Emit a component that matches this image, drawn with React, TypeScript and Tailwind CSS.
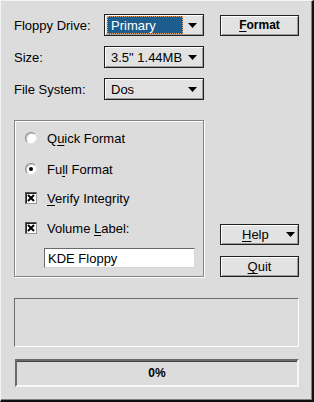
import React from "react";

const U = ({ children }: { children: React.ReactNode }) => (
  <span className="underline decoration-1 underline-offset-[2px]">{children}</span>
);

const Arrow = () => (
  <svg width="9" height="5" viewBox="0 0 9 5" className="shrink-0">
    <polygon points="0,0 9,0 4.5,5" fill="#000" />
  </svg>
);

const bevel =
  "border border-[#202020] bg-[#e2e2e2] shadow-[inset_1px_1px_0_#ffffff,inset_-1px_-1px_0_#9a9a9a]";

function Combo({ value, focused }: { value: string; focused?: boolean }) {
  return (
    <div className={`w-[100px] h-[22px] flex items-center pr-[6px] ${bevel}`}>
      {focused ? (
        <div className="ml-[2px] flex-1 h-[18px] bg-[#1d5d8d] text-white flex items-center pl-[4px] outline-1 outline-dotted outline-[#e8a060] -outline-offset-1">
          {value}
        </div>
      ) : (
        <div className="ml-[6px] flex-1">{value}</div>
      )}
      <div className="ml-[5px]">
        <Arrow />
      </div>
    </div>
  );
}

function Radio({ checked }: { checked?: boolean }) {
  return (
    <div className="w-[12px] h-[12px] rounded-full bg-white border border-t-[#8a8a8a] border-l-[#8a8a8a] border-r-[#e8e8e8] border-b-[#e8e8e8] flex items-center justify-center shadow-[inset_1px_1px_0_#c8c8c8]">
      {checked && <div className="w-[4px] h-[4px] rounded-full bg-black" />}
    </div>
  );
}

function Check() {
  return (
    <div className="w-[12px] h-[12px] bg-white border border-t-[#555] border-l-[#555] border-r-[#999] border-b-[#999] shadow-[inset_1px_1px_0_#222] flex items-center justify-center">
      <svg width="8" height="8" viewBox="0 0 8 8">
        <path d="M1 1 L7 7 M7 1 L1 7" stroke="#000" strokeWidth="2" />
      </svg>
    </div>
  );
}

export default function App() {
  return (
    <div className="w-[314px] h-[402px] bg-[#dcdcdc] text-black text-[13px] leading-none font-['Liberation_Sans',Arial,sans-serif] border-l border-t border-l-[#f4f4f4] border-t-[#f4f4f4] border-r-2 border-b-2 border-r-[#111] border-b-[#111] shadow-[inset_-1px_-1px_0_#808080]">
      <div className="pl-[13px] pt-[13px] flex flex-col">
        <div className="flex items-center h-[22px]">
          <div className="w-[90px]">Floppy Drive:</div>
          <Combo value="Primary" focused />
          <div className={`ml-[16px] w-[79px] h-[21px] flex items-center justify-center font-bold text-[12px] ${bevel}`}>
            <U>F</U>ormat
          </div>
        </div>
        <div className="flex items-center h-[22px] mt-[10px]">
          <div className="w-[90px]">Size:</div>
          <Combo value={'3.5" 1.44MB'} />
        </div>
        <div className="flex items-center h-[22px] mt-[10px]">
          <div className="w-[90px]">File System:</div>
          <Combo value="Dos" />
        </div>

        <div className="flex mt-[20px]">
          <div className="w-[190px] h-[157px] border border-[#858585] shadow-[inset_1px_1px_0_#fff,1px_1px_0_#fff] pl-[10px] pt-[7px] flex flex-col">
            <div className="flex items-center h-[20px]">
              <Radio />
              <span className="ml-[10px]">
                Q<U>u</U>ick Format
              </span>
            </div>
            <div className="flex items-center h-[20px] mt-[11px]">
              <Radio checked />
              <span className="ml-[10px]">
                Fu<U>l</U>l Format
              </span>
            </div>
            <div className="flex items-center h-[20px] mt-[9px]">
              <Check />
              <span className="ml-[10px]">
                <U>V</U>erify Integrity
              </span>
            </div>
            <div className="flex items-center h-[20px] mt-[10px]">
              <Check />
              <span className="ml-[10px]">
                Volume <U>L</U>abel:
              </span>
            </div>
            <div className="ml-[19px] mt-[10px] w-[151px] h-[20px] bg-white border border-t-[#6a6a6a] border-l-[#6a6a6a] border-r-[#d8d8d8] border-b-[#d8d8d8] flex items-center pl-[3px]">
              KDE Floppy
            </div>
          </div>
          <div className="ml-[16px] w-[79px] flex flex-col justify-end">
            <div className={`h-[21px] flex items-center pl-[21px] pr-[3px] ${bevel}`}>
              <span className="flex-1">
                <U>H</U>elp
              </span>
              <Arrow />
            </div>
            <div className={`h-[21px] mt-[11px] flex items-center justify-center ${bevel}`}>
              <span>
                <U>Q</U>uit
              </span>
            </div>
          </div>
        </div>

        <div className="mt-[21px] w-[285px] h-[49px] border border-t-[#6e6e6e] border-l-[#6e6e6e] border-r-white border-b-white" />

        <div className="mt-[12px] ml-[1px] w-[284px] h-[28px] border-2 border-t-[#6a6a6a] border-l-[#6a6a6a] border-r-[#f6f6f6] border-b-[#f6f6f6] shadow-[inset_0_1px_0_#444] flex items-center justify-center font-bold text-[12px]">
          0%
        </div>
      </div>
    </div>
  );
}
